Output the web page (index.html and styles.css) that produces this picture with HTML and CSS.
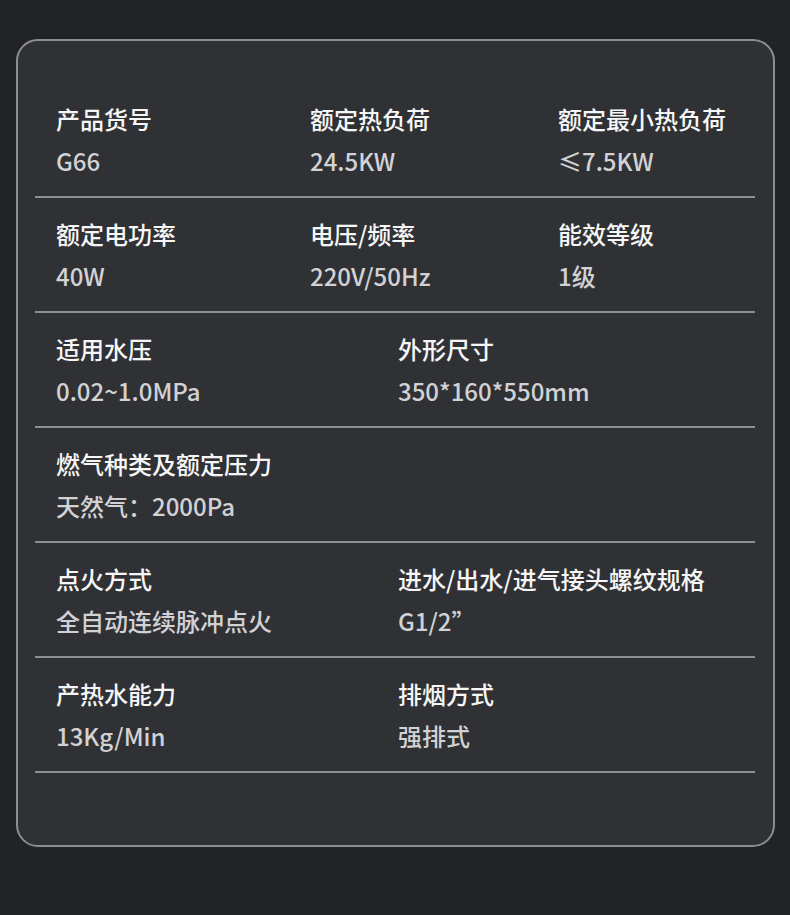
FILE: index.html
```html
<!DOCTYPE html>
<html lang="zh-CN">
<head>
<meta charset="utf-8">
<link rel="stylesheet" href="styles.css">
</head>
<body>
<div class="card">
  <div class="row row3">
    <div class="item"><div class="label">产品货号</div><div class="value">G66</div></div>
    <div class="item"><div class="label">额定热负荷</div><div class="value">24.5KW</div></div>
    <div class="item"><div class="label">额定最小热负荷</div><div class="value">≤7.5KW</div></div>
  </div>
  <div class="row row3">
    <div class="item"><div class="label">额定电功率</div><div class="value">40W</div></div>
    <div class="item"><div class="label">电压/频率</div><div class="value">220V/50Hz</div></div>
    <div class="item"><div class="label">能效等级</div><div class="value">1级</div></div>
  </div>
  <div class="row row2">
    <div class="item"><div class="label">适用水压</div><div class="value">0.02~1.0MPa</div></div>
    <div class="item"><div class="label">外形尺寸</div><div class="value">350*160*550mm</div></div>
  </div>
  <div class="row row2">
    <div class="item"><div class="label">燃气种类及额定压力</div><div class="value">天然气：2000Pa</div></div>
  </div>
  <div class="row row2">
    <div class="item"><div class="label">点火方式</div><div class="value">全自动连续脉冲点火</div></div>
    <div class="item"><div class="label">进水/出水/进气接头螺纹规格</div><div class="value">G1/2”</div></div>
  </div>
  <div class="row row2">
    <div class="item"><div class="label">产热水能力</div><div class="value">13Kg/Min</div></div>
    <div class="item"><div class="label">排烟方式</div><div class="value">强排式</div></div>
  </div>
</div>
</body>
</html>
```
FILE: styles.css
```css
html, body {
  margin: 0;
  padding: 0;
}
body {
  background: #222327;
  width: 790px;
  height: 915px;
  overflow: hidden;
  padding-top: 39px;
  box-sizing: border-box;
  font-family: "Noto Sans CJK SC", "Noto Sans", sans-serif;
}
.card {
  margin-left: 16px;
  width: 759px;
  height: 808px;
  box-sizing: border-box;
  border: 2px solid #8c8d90;
  border-radius: 22px;
  background: #303135;
  padding: 42px 18px 0 17px;
}
.row {
  display: grid;
  height: 115px;
  box-sizing: border-box;
  border-bottom: 2px solid #8e8f92;
  padding-left: 21px;
}
.row3 {
  grid-template-columns: 254px 248px 1fr;
}
.row2 {
  grid-template-columns: 342px 1fr;
}
.item {
  padding-top: 20px;
}
.label {
  font-size: 24px;
  line-height: 32px;
  font-weight: 500;
  color: #f6f6f7;
  white-space: nowrap;
}
.value {
  margin-top: 10px;
  font-size: 24px;
  line-height: 32px;
  font-weight: 500;
  color: #d2d2d5;
  white-space: nowrap;
}
```
